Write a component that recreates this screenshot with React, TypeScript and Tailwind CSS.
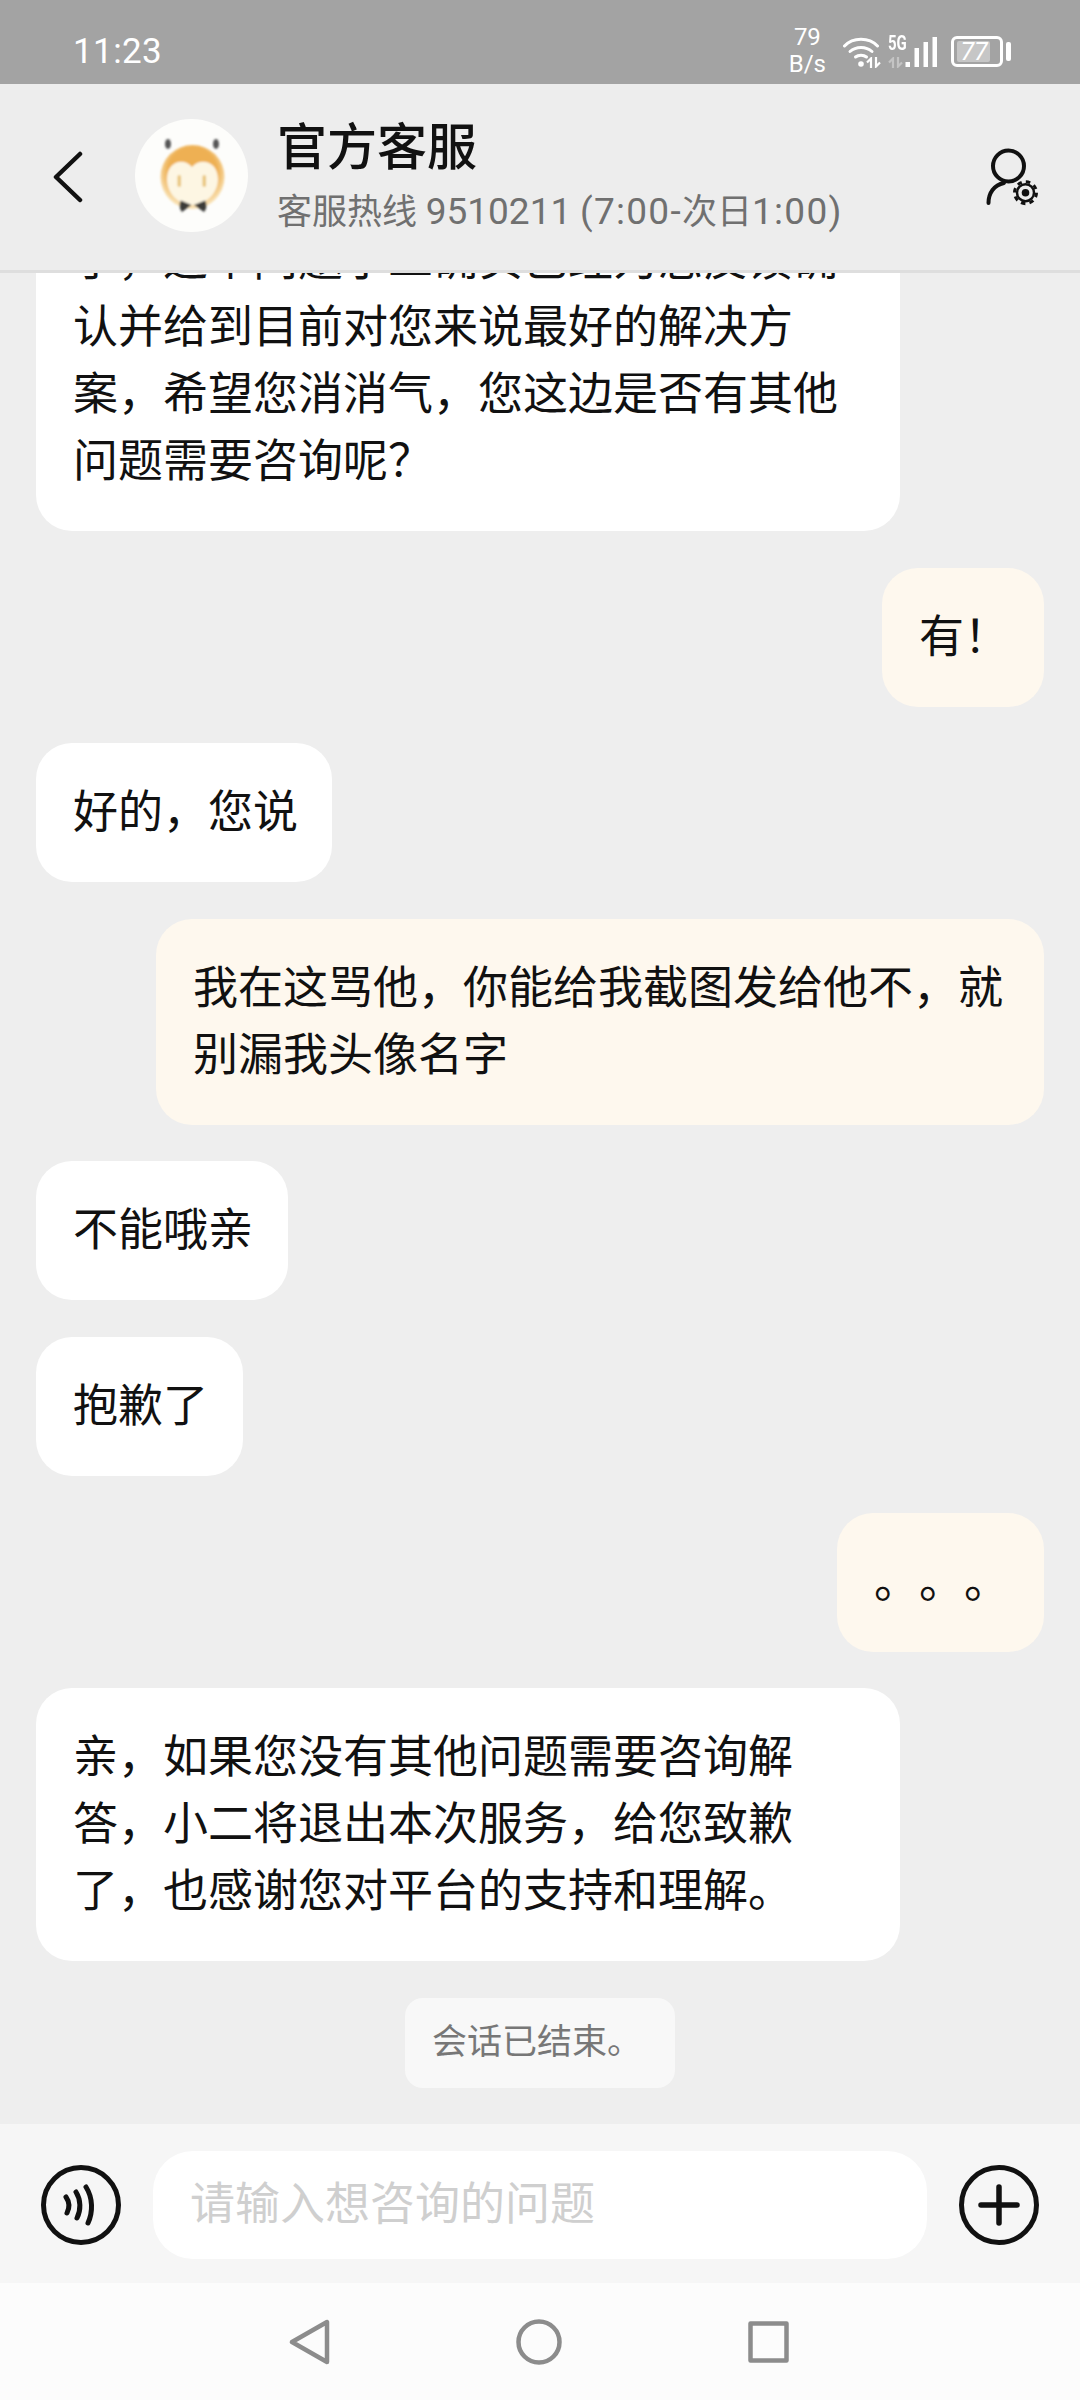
const FONT = "font-['Roboto','Noto_Sans_CJK_SC',sans-serif]";

function Bubble({ lines, className = "" }: { lines: string[]; className?: string }) {
  return (
    <div className={`rounded-[36px] px-[37px] py-[36px] text-[45px] leading-[67px] text-[#111] [text-spacing-trim:space-all] ${className}`}>
      {lines.map((l) => (
        <div key={l} className="whitespace-nowrap">{l}</div>
      ))}
    </div>
  );
}

function AgentBubble({ lines, className = "" }: { lines: string[]; className?: string }) {
  return <Bubble lines={lines} className={`self-start bg-white ${className}`} />;
}

function UserBubble({ lines, className = "" }: { lines: string[]; className?: string }) {
  return <Bubble lines={lines} className={`self-end bg-[#fef8ee] ${className}`} />;
}

function UpDown({ color }: { color: string }) {
  return (
    <svg width="16" height="11" viewBox="0 0 16 11" fill="none" stroke={color} strokeWidth="2.200">
      <path d="M5 11V1.500L1 5.500" />
      <path d="M10 0V9.500L14 5.500" />
    </svg>
  );
}

export default function App() {
  return (
    <div className={`${FONT} relative w-[1080px] h-[2400px] bg-[#eeeeee] overflow-hidden flex flex-col`}>
      {/* status bar */}
      <div className="h-[84px] shrink-0 bg-[#a3a3a3] flex items-start text-white pt-[36px] pl-[73px] pr-[69px]">
        <span className="text-[35px] leading-[32px] tracking-[0.4px]">11:23</span>
        <div className="ml-auto flex items-start">
          <div className="text-[24px] leading-[27px] text-center mt-[-12px]">
            <div>79</div>
            <div>B/s</div>
          </div>
          <div className="relative ml-[17px] w-[36px] h-[31px]">
            <svg width="36" height="31" viewBox="0 0 36 31" fill="none" stroke="white" strokeWidth="3" strokeLinecap="round">
              <path d="M1.500 10C10 1 26 1 34.500 10" />
              <path d="M7 15.500C13 10 23 10 29 15.500" />
              <path d="M12.500 21C15.500 18.500 20.500 18.500 23.500 21" />
              <circle cx="18" cy="28" r="2.800" fill="white" stroke="none" />
            </svg>
            <div className="absolute right-[-3px] bottom-[-1px]">
              <UpDown color="white" />
            </div>
          </div>
          <div className="ml-[9px] w-[17px] flex flex-col">
            <div className="text-[20px] leading-[15px] font-bold scale-x-75 origin-left whitespace-nowrap">5G</div>
            <div className="mt-[6px]">
              <UpDown color="#c4c4c4" />
            </div>
          </div>
          <svg width="33" height="31" viewBox="0 0 33 31" fill="white">
            <rect x="0.500" y="26" width="4.500" height="5" />
            <rect x="9.500" y="12" width="4.500" height="19" />
            <rect x="18.500" y="6" width="4.500" height="25" />
            <rect x="27.500" y="1" width="4.500" height="30" />
          </svg>
          <div className="relative ml-[13px] w-[52px] h-[31px] rounded-[6px] border-[3px] border-white flex items-center pl-[3px] py-[2px]">
            <div className="w-[33px] h-full bg-[#c6c6c6] rounded-[2px]"></div>
            <span className="absolute inset-0 flex items-center justify-center text-[25px] italic leading-none pr-[6px]">77</span>
          </div>
          <div className="w-[5px] h-[19px] ml-[3px] mt-[6px] bg-white rounded-[2px]"></div>
        </div>
      </div>

      {/* header */}
      <div className="relative z-10 h-[189px] shrink-0 bg-[#ededed] border-b-[3px] border-[#dedede] flex items-center">
        <svg width="32" height="52" viewBox="0 0 32 52" fill="none" stroke="#111" strokeWidth="4.500" strokeLinecap="round" strokeLinejoin="round" className="ml-[52px]">
          <path d="M28 3L4 26L28 49" />
        </svg>
        <div className="ml-[51px] w-[113px] h-[113px] rounded-full bg-[#fdfdfb] flex items-center justify-center mt-[-4px]">
          <svg width="72" height="84" viewBox="0 0 72 84">
            <defs>
              <radialGradient id="head" cx="50%" cy="42%" r="55%">
                <stop offset="70%" stopColor="#eeb053" />
                <stop offset="100%" stopColor="#f9e2b5" />
              </radialGradient>
              <filter id="soft">
                <feGaussianBlur stdDeviation="0.900" />
              </filter>
            </defs>
            <g filter="url(#soft)">
              <ellipse cx="12" cy="11" rx="3" ry="5" fill="#555" />
              <ellipse cx="60" cy="11" rx="3" ry="5" fill="#555" />
              <circle cx="36.500" cy="44" r="32" fill="url(#head)" />
              <path d="M36 34C28 24 11 28 11 46C11 62 24 72 36 72C48 72 62 62 62 46C62 28 44 24 36 34Z" fill="#fdf6e3" />
              <rect x="21.500" y="42" width="3.500" height="12" rx="1.750" fill="#e9c67d" />
              <rect x="46.500" y="42" width="3.500" height="12" rx="1.750" fill="#e9c67d" />
              <path d="M35.500 72L25 67.500C22.500 71 23.500 76 26 79Z" fill="#3a3a38" />
              <path d="M38 72L49 67.500C51.500 71 50.500 76 48 79Z" fill="#3a3a38" />
            </g>
          </svg>
        </div>
        <div className="ml-[29px] flex flex-col mt-[-1px]">
          <div className="text-[50px] leading-[62px] font-medium text-[#111]">官方客服</div>
          <div className="text-[35px] leading-[46px] mt-[10px] text-[#707070] whitespace-nowrap">
            客服热线 <span className="text-[37px]">9510211</span> <span className="text-[37px] tracking-[1.300px]">(7:00-</span>次日<span className="text-[37px] tracking-[1.300px]">1:00)</span>
          </div>
        </div>
        <svg width="56" height="62" viewBox="0 0 56 62" fill="none" stroke="#111" className="absolute left-[985px] top-[63px]">
          <circle cx="23.500" cy="19" r="15.500" strokeWidth="4" />
          <path d="M3.500 56C3.500 46 9 38 19 36" strokeWidth="4" strokeLinecap="round" />
          <circle cx="40.500" cy="45.700" r="11" strokeWidth="3" strokeDasharray="4.500 4.140" />
          <circle cx="40.500" cy="45.700" r="8.500" strokeWidth="2.500" fill="#ededed" />
          <circle cx="40.500" cy="45.700" r="3.800" fill="#111" stroke="none" />
        </svg>
      </div>

      {/* messages, the list is scrolled so the first bubble runs under the header */}
      <div className="flex flex-col gap-[36.6px] px-[36px] mt-[-82px]">
        <AgentBubble
          className="w-[864px]"
          lines={["了，这个问题小二确实已经为您反馈确", "认并给到目前对您来说最好的解决方", "案，希望您消消气，您这边是否有其他", "问题需要咨询呢？"]}
        />
        <UserBubble className="w-[162px]" lines={["有！"]} />
        <AgentBubble className="w-[296px]" lines={["好的，您说"]} />
        <UserBubble className="w-[888px]" lines={["我在这骂他，你能给我截图发给他不，就", "别漏我头像名字"]} />
        <AgentBubble className="w-[252px]" lines={["不能哦亲"]} />
        <AgentBubble className="w-[207px]" lines={["抱歉了"]} />
        <UserBubble className="w-[207px]" lines={["。。。"]} />
        <AgentBubble
          className="w-[864px]"
          lines={["亲，如果您没有其他问题需要咨询解", "答，小二将退出本次服务，给您致歉", "了，也感谢您对平台的支持和理解。"]}
        />
        <div className="self-center w-[270px] bg-[#f8f8f8] rounded-[18px] h-[90px] pl-[27px] flex items-center text-[35px] text-[#777] whitespace-nowrap">
          会话已结束。
        </div>
      </div>

      {/* input bar */}
      <div className="absolute left-0 right-0 top-[2124px] h-[159px] pt-[2px] bg-[#f6f6f6] flex items-center">
        <svg width="80" height="80" viewBox="0 0 80 80" fill="none" stroke="#111" strokeLinecap="round" className="ml-[41px]">
          <circle cx="40" cy="40" r="37.500" strokeWidth="5" />
          <path d="M25 32C28.500 37 28.500 43 26 48" strokeWidth="5" />
          <path d="M35 27C40 35 40 45 36 53" strokeWidth="5" />
          <path d="M45 22C52 33 52 47 47 58" strokeWidth="5" />
        </svg>
        <div className="ml-[32px] w-[774px] h-[108px] rounded-[40px] bg-white flex items-center pl-[37px] text-[45px] text-[#cfcfcf]">
          请输入想咨询的问题
        </div>
        <svg width="80" height="80" viewBox="0 0 80 80" fill="none" stroke="#111" strokeLinecap="round" className="ml-[32px]">
          <circle cx="40" cy="40" r="37.500" strokeWidth="5" />
          <path d="M40 22V58M22 40H58" strokeWidth="5.500" />
        </svg>
      </div>

      {/* nav bar */}
      <div className="absolute left-0 right-0 top-[2283px] h-[117px] bg-[#fcfcfc] flex items-start justify-center gap-[186px] pt-[36px] pr-[2px]">
        <svg width="41" height="46" viewBox="0 0 41 46" fill="none" stroke="#8c8c8c" strokeWidth="4.500" strokeLinejoin="round">
          <path d="M38 3V43L3 23Z" />
        </svg>
        <svg width="46" height="46" viewBox="0 0 46 46" fill="none" stroke="#8c8c8c" strokeWidth="4.500">
          <circle cx="23" cy="23" r="20.500" />
        </svg>
        <svg width="41" height="42" viewBox="0 0 41 42" fill="none" stroke="#8c8c8c" strokeWidth="4.500" strokeLinejoin="round" className="mt-[2px]">
          <rect x="2.500" y="2.500" width="36" height="37" />
        </svg>
      </div>
    </div>
  );
}
